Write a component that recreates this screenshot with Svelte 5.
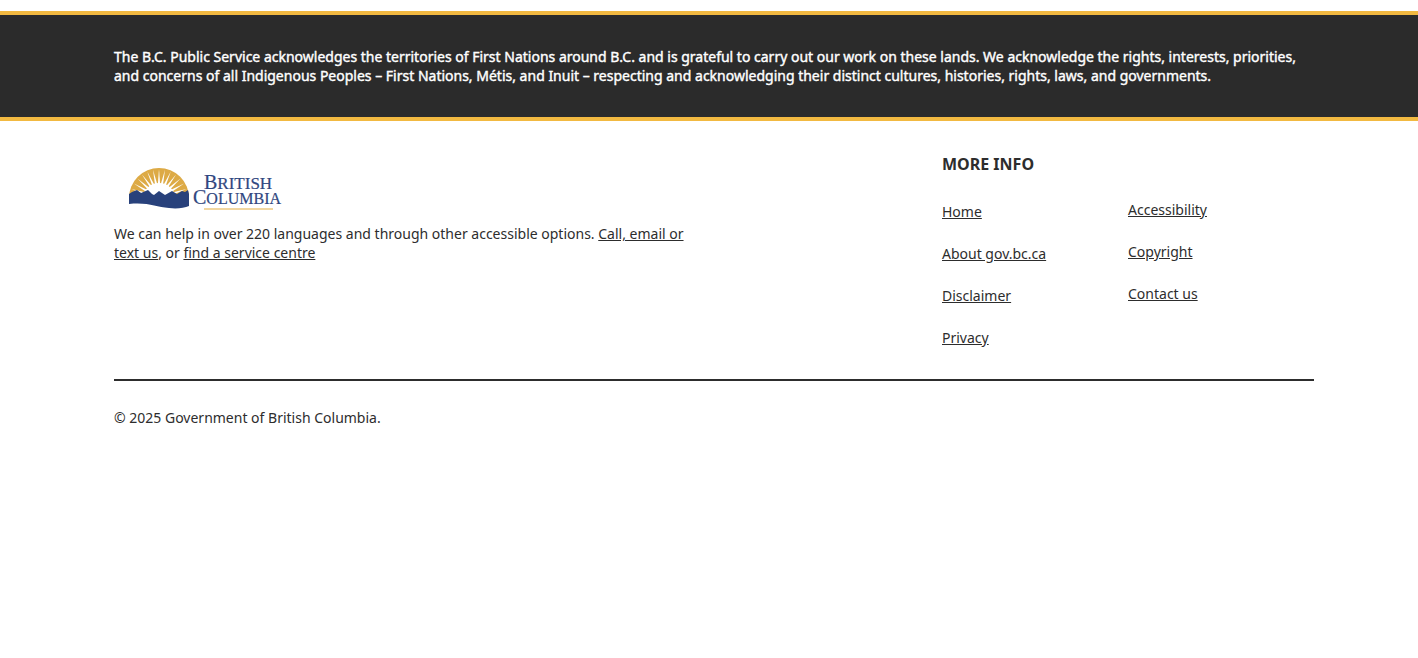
<script>
  const columns = [
    ['Home', 'About gov.bc.ca', 'Disclaimer', 'Privacy'],
    ['Accessibility', 'Copyright', 'Contact us']
  ];

  // Sun rays fan out from the centre of the half disc.
  const rays = Array.from({ length: 15 }, (_, i) => {
    const angle = (Math.PI * (i + 0.5)) / 15;
    const at = (r, a) => `${(31 - r * Math.cos(a)).toFixed(2)},${(31 - r * Math.sin(a)).toFixed(2)}`;
    return `${at(14, angle - 0.08)} ${at(29, angle)} ${at(14, angle + 0.08)}`;
  });
</script>

<footer>
  <section class="acknowledgement">
    <div class="container">
      <p>
        The B.C. Public Service acknowledges the territories of First Nations around B.C. and is
        grateful to carry out our work on these lands. We acknowledge the rights, interests,
        priorities, and concerns of all Indigenous Peoples – First Nations, Métis, and Inuit –
        respecting and acknowledging their distinct cultures, histories, rights, laws, and
        governments.
      </p>
    </div>
  </section>

  <div class="container">
    <div class="main">
      <div class="about">
        <svg class="logo" width="156" height="44" viewBox="0 0 156 44" role="img" aria-label="British Columbia">
          <path d="M1 31A30 30 0 0 1 61 31Z" fill="#ddaa45" />
          <g fill="#fff">
            {#each rays as points}
              <polygon {points} />
            {/each}
          </g>
          <path d="M15 31A16 15 0 0 1 47 31Z" fill="#fff" />
          <path
            d="M1 27L4 25L9 23L13 26L20 23L24 27L26 28L31 24L34 26L37 28L44 24L49 27L54 24L57 25L60 23L61 27V39C56 41 49 42 41 41C28 40 20 35 1 37Z"
            fill="#28417b"
          />
          <g fill="#304780">
            <text x="76" y="22" class="cap">B<tspan class="wide">RITISH</tspan></text>
            <text x="65" y="37" class="cap">C<tspan class="small">OLUMBIA</tspan></text>
          </g>
          <path d="M76 42H145" stroke="#edc880" stroke-width="1.5" />
        </svg>
        <p>
          We can help in over 220 languages and through other accessible options.
          <a href="#contact">Call, email or text us</a>, or <a href="#centres">find a service centre</a>
        </p>
      </div>

      <nav aria-labelledby="more-info">
        <h2 id="more-info">MORE INFO</h2>
        <div class="links">
          {#each columns as links}
            <ul>
              {#each links as link}
                <li><a href="#top">{link}</a></li>
              {/each}
            </ul>
          {/each}
        </div>
      </nav>
    </div>
    <p class="copyright">© 2025 Government of British Columbia.</p>
  </div>
</footer>

<style>
  :global(body) {
    margin: 0;
    background: #fff;
  }

  footer {
    padding-top: 11px;
    color: #2d2d2d;
    font: 14px/19px 'Noto Sans', sans-serif;
  }

  p,
  h2,
  ul {
    margin: 0;
    padding: 0;
  }

  a {
    color: inherit;
    text-decoration: underline;
  }

  .container {
    padding: 0 104px 0 114px;
  }

  .acknowledgement {
    padding: 32px 0;
    border-top: 4px solid #f2b941;
    border-bottom: 4px solid #f2b941;
    background: #2b2b2b;
    color: #fff;
    -webkit-text-stroke: 0.4px #fff;
  }

  .main {
    display: flex;
    justify-content: space-between;
    padding: 32px 0;
    border-bottom: 2px solid #2d2d2d;
  }

  .about {
    flex: 0 1 48%;
    padding-top: 14px;
  }

  .logo {
    display: block;
    margin: 0 0 13px 14px;
  }

  .cap {
    font: 20px 'Liberation Serif', serif;
    stroke: #304780;
    stroke-width: 0.2px;
  }

  .wide {
    font-size: 17px;
  }

  .small {
    font-size: 16px;
  }

  nav {
    flex: 0 0 31%;
  }

  h2 {
    font-size: 16px;
    line-height: 22px;
  }

  .links {
    display: grid;
    grid-template-columns: 1fr 1fr;
    padding-top: 25px;
  }

  ul {
    display: grid;
    align-content: start;
    gap: 23px;
    list-style: none;
  }

  ul:first-child {
    padding-top: 2px;
  }

  .copyright {
    padding: 27px 0;
  }
</style>
